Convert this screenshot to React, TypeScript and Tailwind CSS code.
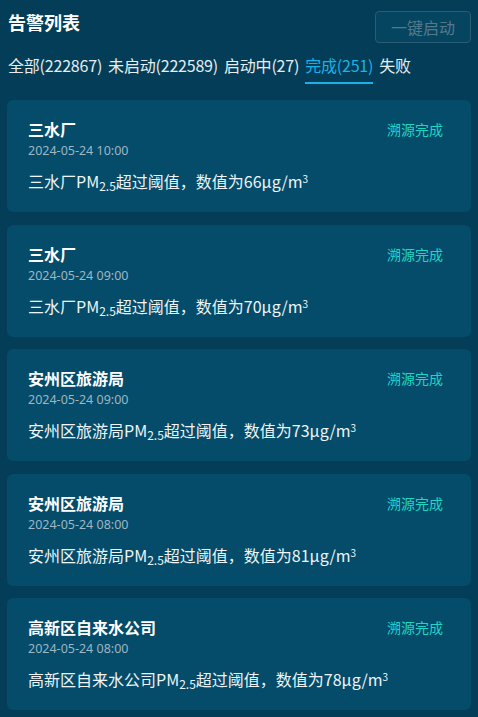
import React from 'react'

const alerts = [
  { name: '三水厂', time: '2024-05-24 10:00', value: 66 },
  { name: '三水厂', time: '2024-05-24 09:00', value: 70 },
  { name: '安州区旅游局', time: '2024-05-24 09:00', value: 73 },
  { name: '安州区旅游局', time: '2024-05-24 08:00', value: 81 },
  { name: '高新区自来水公司', time: '2024-05-24 08:00', value: 78 },
]

const tabs = [
  { label: '全部(222867)' },
  { label: '未启动(222589)' },
  { label: '启动中(27)' },
  { label: '完成(251)', active: true },
  { label: '失败' },
]

export default function App() {
  return (
    <div
      className="w-[478px] h-[717px] overflow-hidden bg-[#033d58] text-[#e6eef2]"
      style={{ fontFamily: '"Noto Sans CJK SC", "Noto Sans", sans-serif' }}
    >
      <div className="flex items-start justify-between pl-2 pr-[7px] pt-[10px]">
        <h1 className="text-[18px] leading-6 font-bold text-white">告警列表</h1>
        <button className="mt-[1px] h-8 w-24 rounded border border-[#2b5c76] bg-[#064560] text-[16px] text-[#54798d]">
          一键启动
        </button>
      </div>

      <div className="flex gap-[6px] px-2 mt-[11px]">
        {tabs.map((t) => (
          <div
            key={t.label}
            className={
              t.active
                ? 'text-[16px] leading-[22px] tracking-[-0.2px] pb-[6px] border-b-2 border-[#1ab2e6] text-[#1ab2e6]'
                : 'text-[16px] leading-[22px] tracking-[-0.2px] pb-[6px] border-b-2 border-transparent text-[#e6eef2]'
            }
          >
            {t.label}
          </div>
        ))}
      </div>

      <div className="flex flex-col gap-[12.5px] px-[7px] mt-4">
        {alerts.map((a, i) => (
          <div key={i} className="rounded-md bg-[#044c6a] pl-[21px] pr-[28px] pt-[18px] pb-[20px]">
            <div className="flex items-center justify-between">
              <div className="text-[16px] leading-[22px] font-bold text-white">{a.name}</div>
              <div className="text-[14px] leading-[22px] text-[#1fd6c6]">溯源完成</div>
            </div>
            <div className="mt-[3px] text-[12.5px] leading-4 text-[#9fb6c3] font-['Noto_Sans',sans-serif]">
              {a.time}
            </div>
            <div className="mt-[11px] text-[16px] leading-[22px] text-[#eef4f7]">
              {a.name}PM<sub className="text-[12px]">2.5</sub>超过阈值，数值为{a.value}μg/m
              <sup className="text-[10px]">3</sup>
            </div>
          </div>
        ))}
      </div>
    </div>
  )
}
